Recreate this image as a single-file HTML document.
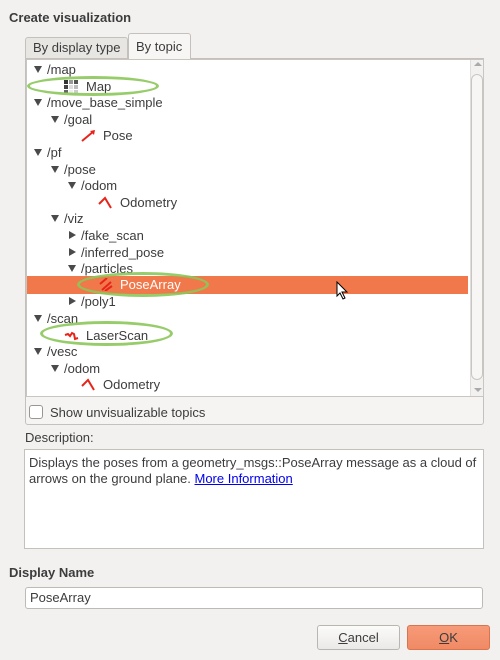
<!DOCTYPE html>
<html><head><style>
*{margin:0;padding:0;box-sizing:border-box}
body{width:500px;height:660px;background:#f2f1f0;font-family:"Liberation Sans",sans-serif;font-size:13px;color:#3c3c3c;position:relative;overflow:hidden}
.a{position:absolute;white-space:nowrap}
.row{position:absolute;left:0;height:17px;line-height:17px;width:441px}
.tri{position:absolute;width:0;height:0}
.down{border-left:4px solid transparent;border-right:4px solid transparent;border-top:7px solid #4a4a4a;top:5px}
.right{border-top:4px solid transparent;border-bottom:4px solid transparent;border-left:7px solid #4a4a4a;top:4px}
.t{position:absolute;top:0}
.ell{position:absolute;border:3px solid #8cc65a;border-radius:50%;opacity:.9}
</style></head><body>
<div class="a" style="left:9px;top:10px;font-weight:bold;font-size:13px">Create visualization</div>
<div class="a" style="left:25px;top:37px;width:103px;height:22px;border:1px solid #c4c1bd;border-bottom:none;border-radius:3px 3px 0 0;background:#e8e6e3;line-height:20px;padding-left:7px">By display type</div>
<div class="a" style="left:128px;top:33px;width:63px;height:26px;border:1px solid #c4c1bd;border-bottom:none;border-radius:3px 3px 0 0;background:#f7f6f5;line-height:26px;padding-left:7px;z-index:2">By topic</div>
<div class="a" style="left:25px;top:58px;width:459px;height:367px;border:1px solid #c4c1bd;border-radius:0 0 3px 3px;background:#f5f4f3"></div>
<div class="a" style="left:26px;top:59px;width:458px;height:338px;background:#fff;border:1px solid #c9c6c2;overflow:hidden">
<div style="position:absolute;left:0;top:1px">
<div class="row" style="top:0"><div class="tri down" style="left:7px"></div><span class="t" style="left:20px">/map</span></div>
<div class="row" style="top:16.6px"><svg class="t" style="left:37px;top:2px" width="14" height="13"><rect x="0" y="0" width="4" height="4" fill="#333"/><rect x="5" y="0" width="4" height="4" fill="#999"/><rect x="10" y="0" width="4" height="4" fill="#555"/><rect x="0" y="5" width="4" height="4" fill="#444"/><rect x="5" y="5" width="4" height="4" fill="#ddd"/><rect x="10" y="5" width="4" height="4" fill="#bbb"/><rect x="0" y="10" width="4" height="3" fill="#666"/><rect x="5" y="10" width="4" height="3" fill="#eee"/><rect x="10" y="10" width="4" height="3" fill="#ccc"/></svg><span class="t" style="left:59px">Map</span></div>
<div class="row" style="top:33.2px"><div class="tri down" style="left:7px"></div><span class="t" style="left:20px">/move_base_simple</span></div>
<div class="row" style="top:49.8px"><div class="tri down" style="left:24px"></div><span class="t" style="left:37px">/goal</span></div>
<div class="row" style="top:66.4px"><svg class="t" style="left:54px;top:2px" width="15" height="13"><path d="M1 12 L13 2" stroke="#e8241a" stroke-width="2"/><path d="M9 2 L14 1 L13 6 Z" fill="#e8241a"/></svg><span class="t" style="left:76px">Pose</span></div>
<div class="row" style="top:83px"><div class="tri down" style="left:7px"></div><span class="t" style="left:20px">/pf</span></div>
<div class="row" style="top:99.6px"><div class="tri down" style="left:24px"></div><span class="t" style="left:37px">/pose</span></div>
<div class="row" style="top:116.2px"><div class="tri down" style="left:41px"></div><span class="t" style="left:54px">/odom</span></div>
<div class="row" style="top:132.8px"><svg class="t" style="left:71px;top:2px" width="16" height="13"><path d="M1 8 L7 2 L13 12" stroke="#e8241a" stroke-width="2" fill="none"/></svg><span class="t" style="left:93px">Odometry</span></div>
<div class="row" style="top:149.4px"><div class="tri down" style="left:24px"></div><span class="t" style="left:37px">/viz</span></div>
<div class="row" style="top:166px"><div class="tri right" style="left:42px"></div><span class="t" style="left:54px">/fake_scan</span></div>
<div class="row" style="top:182.6px"><div class="tri right" style="left:42px"></div><span class="t" style="left:54px">/inferred_pose</span></div>
<div class="row" style="top:199.2px"><div class="tri down" style="left:41px"></div><span class="t" style="left:54px">/particles</span></div>
<div class="row" style="top:215.3px;height:18px;line-height:18px;background:#f0784a;color:#fff"><svg class="t" style="left:71px;top:2px" width="15" height="13"><path d="M2 6 L9 0 M4 12 L13 4 M7 13 L14 8" stroke="#e8241a" stroke-width="2"/></svg><span class="t" style="left:93px">PoseArray</span></div>
<div class="row" style="top:232.4px"><div class="tri right" style="left:42px"></div><span class="t" style="left:54px">/poly1</span></div>
<div class="row" style="top:249px"><div class="tri down" style="left:7px"></div><span class="t" style="left:20px">/scan</span></div>
<div class="row" style="top:265.6px"><svg class="t" style="left:37px;top:2px" width="16" height="13"><path d="M1 6 L4 5 L6 7 L8 4 L10 5 L11 10 L14 9" stroke="#e8241a" stroke-width="2" fill="none"/></svg><span class="t" style="left:59px">LaserScan</span></div>
<div class="row" style="top:282.2px"><div class="tri down" style="left:7px"></div><span class="t" style="left:20px">/vesc</span></div>
<div class="row" style="top:298.8px"><div class="tri down" style="left:24px"></div><span class="t" style="left:37px">/odom</span></div>
<div class="row" style="top:315.4px"><svg class="t" style="left:54px;top:2px" width="16" height="13"><path d="M1 8 L7 2 L13 12" stroke="#e8241a" stroke-width="2" fill="none"/></svg><span class="t" style="left:76px">Odometry</span></div>
</div>
<div style="position:absolute;left:443px;top:0;width:14px;height:336px;background:#f2f1f0;border-left:1px solid #e0deda"></div>
<div style="position:absolute;left:444px;top:14px;width:12px;height:306px;border:1px solid #c9c6c2;border-radius:6px;background:#f7f6f5"></div>
<div style="position:absolute;left:447px;top:2px;border-left:4px solid transparent;border-right:4px solid transparent;border-bottom:4px solid #aaa"></div>
<div style="position:absolute;left:447px;top:328px;border-left:4px solid transparent;border-right:4px solid transparent;border-top:4px solid #aaa"></div>
</div>
<div class="ell" style="left:27px;top:76px;width:132px;height:20px"></div>
<div class="ell" style="left:77px;top:272px;width:132px;height:25px"></div>
<div class="ell" style="left:40px;top:321px;width:133px;height:25px"></div>
<svg class="a" style="left:336px;top:281px" width="14" height="20"><path d="M1 1 L1 15 L4 12 L7 18 L9 17 L6 11 L11 11 Z" fill="#fff" stroke="#000" stroke-width="1"/></svg>
<div class="a" style="left:29px;top:405px;width:14px;height:14px;border:1px solid #9a9793;border-radius:3px;background:#fff"></div>
<div class="a" style="left:50px;top:404px;line-height:17px">Show unvisualizable topics</div>
<div class="a" style="left:25px;top:429px;line-height:17px">Description:</div>
<div class="a" style="left:24px;top:449px;width:460px;height:100px;background:#fff;border:1px solid #c4c1bd;padding:5px 4px;line-height:16px;white-space:normal;color:#3c3c3c">Displays the poses from a geometry_msgs::PoseArray message as a cloud of arrows on the ground plane. <span style="color:#0000ee;text-decoration:underline">More Information</span></div>
<div class="a" style="left:9px;top:565px;font-weight:bold">Display Name</div>
<div class="a" style="left:25px;top:587px;width:458px;height:22px;background:#fff;border:1px solid #bdbab6;border-radius:3px;line-height:20px;padding-left:4px">PoseArray</div>
<div class="a" style="left:317px;top:625px;width:83px;height:25px;border:1px solid #b9b6b2;border-radius:3px;background:linear-gradient(#fbfbfa,#ebe9e7);text-align:center;line-height:23px"><u>C</u>ancel</div>
<div class="a" style="left:407px;top:625px;width:83px;height:25px;border:1px solid #d8754e;border-radius:3px;background:linear-gradient(#f79a78,#f08a65);text-align:center;line-height:23px"><u>O</u>K</div>
</body></html>
